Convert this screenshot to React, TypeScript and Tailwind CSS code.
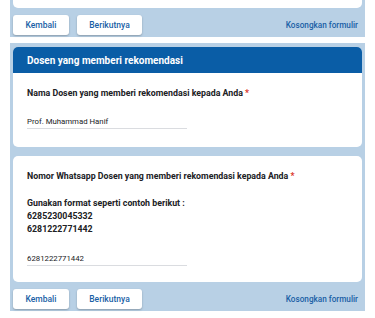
import React from "react";

const NavRow = () => (
  <div className="flex items-center h-[22px] pl-[3px] pr-[7px]">
    <button className="h-[20px] w-[56px] bg-white rounded-[3px] shadow-[0_1px_2px_rgba(0,0,0,0.25)] text-[8.5px] text-[#1a5fa6] font-medium">
      Kembali
    </button>
    <button className="ml-[8px] h-[20px] w-[65px] bg-white rounded-[3px] shadow-[0_1px_2px_rgba(0,0,0,0.25)] text-[8.5px] text-[#1a5fa6] font-medium">
      Berikutnya
    </button>
    <span className="ml-auto text-[8.2px] text-[#1a5fa6] font-medium">Kosongkan formulir</span>
  </div>
);

const App = () => {
  return (
    <div className="w-[375px] h-[318px] bg-white overflow-hidden font-['Roboto',sans-serif] text-[#202124]">
      <div className="mx-[10px] bg-[#b8d0e5] pb-[1px]">
        <div className="mx-[3px] h-[8px] bg-white rounded-b-[5px]" />
        <div className="mt-[6px]">
          <NavRow />
        </div>
      </div>

      <div className="mx-[10px] mt-[6px] bg-[#b8d0e5] pt-[4px] pb-[1px]">
        <div className="mx-[3px] rounded-[5px] bg-white overflow-hidden">
          <div className="h-[26px] bg-[#0a5da6] flex items-center px-[14px] text-white text-[10px] font-bold">
            Dosen yang memberi rekomendasi
          </div>
          <div className="px-[14px] pt-[14px] pb-[18px]">
            <div className="text-[8.8px] leading-[12px] font-bold">
              Nama Dosen yang memberi rekomendasi kepada Anda <span className="text-[#d93025]">*</span>
            </div>
            <div className="mt-[17px] w-[160px] border-b border-[#dadce0] pb-[1px] text-[7.8px] leading-[11px]">
              Prof. Muhammad Hanif
            </div>
          </div>
        </div>

        <div className="mx-[3px] mt-[9px] rounded-[5px] bg-white px-[14px] pt-[14px] pb-[16px]">
          <div className="text-[8.8px] leading-[12px] font-bold">
            Nomor Whatsapp Dosen yang memberi rekomendasi kepada Anda <span className="text-[#d93025]">*</span>
          </div>
          <div className="mt-[15px] text-[8.8px] font-bold leading-[13px]">
            <div>Gunakan format seperti contoh berikut :</div>
            <div>6285230045332</div>
            <div>6281222771442</div>
          </div>
          <div className="mt-[17px] w-[160px] border-b border-[#dadce0] pb-[1px] text-[7.8px] leading-[11px]">
            6281222771442
          </div>
        </div>

        <div className="mt-[6px]">
          <NavRow />
        </div>
      </div>
    </div>
  );
};

export default App;
